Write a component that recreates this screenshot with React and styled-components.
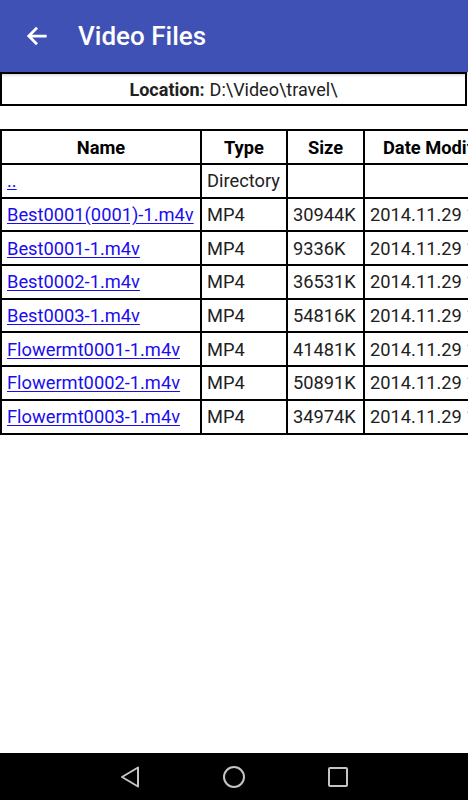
import React from "react";
import styled, { createGlobalStyle } from "styled-components";

const Global = createGlobalStyle`
  html, body { margin: 0; padding: 0; background: #fff; }
  body { font-family: Roboto, "Noto Sans", sans-serif; overflow: hidden; }
`;

const Screen = styled.div`
  width: 468px;
  height: 800px;
  display: flex;
  flex-direction: column;
  overflow: hidden;
  background: #fff;
`;

const AppBar = styled.header`
  height: 72px;
  flex: none;
  background: #3f51b5;
  display: flex;
  align-items: center;
  position: relative;
  z-index: 2;
  box-shadow: 0 2px 4px rgba(0, 0, 0, 0.3);
`;

const BackButton = styled.div`
  width: 31px;
  height: 31px;
  margin-left: 21px;
  display: flex;
  align-items: center;
  justify-content: center;
`;

const Title = styled.h1`
  margin: 0 0 0 26px;
  color: #fff;
  font-family: Roboto, sans-serif;
  font-weight: 500;
  font-size: 26px;
`;

const Content = styled.main`
  flex: 1;
  overflow: hidden;
`;

const LocationBox = styled.div`
  margin: 0 1px 0 0;
  height: 30px;
  border: 2px solid #000;
  display: flex;
  align-items: center;
  justify-content: center;
  font-size: 18px;
  color: #212121;
`;

const Bold = styled.b`
  font-weight: 700;
  margin-right: 5px;
`;

const TableWrap = styled.div`
  margin-top: 23px;
  width: 468px;
  overflow: hidden;
`;

const Table = styled.table`
  border-collapse: collapse;
  border: 2px solid #000;
  font-size: 18.3px;
  color: #212121;
  white-space: nowrap;
  table-layout: fixed;
  width: 516px;
`;

const Th = styled.th`
  border: 2px solid #000;
  height: 32px;
  padding: 0 5px;
  font-weight: 700;
  text-align: center;
  color: #000;
  overflow: hidden;
`;

const Td = styled.td`
  border: 2px solid #000;
  height: 31.7px;
  padding: 0 5px;
  text-align: left;
  vertical-align: middle;
  overflow: hidden;
`;

const FileLink = styled.a`
  color: #1a0dee;
  text-decoration: underline;
  text-underline-offset: 2px;
`;

const NavBar = styled.nav`
  height: 47px;
  flex: none;
  background: #000;
  display: flex;
  align-items: center;
  justify-content: center;
`;

const NavSlot = styled.div`
  width: 104px;
  display: flex;
  justify-content: center;
  align-items: center;
`;

const files = [
  ["Best0001(0001)-1.m4v", "30944K"],
  ["Best0001-1.m4v", "9336K"],
  ["Best0002-1.m4v", "36531K"],
  ["Best0003-1.m4v", "54816K"],
  ["Flowermt0001-1.m4v", "41481K"],
  ["Flowermt0002-1.m4v", "50891K"],
  ["Flowermt0003-1.m4v", "34974K"],
];

export default function App() {
  return (
    <>
      <Global />
      <Screen>
        <AppBar>
          <BackButton>
            <svg width="22" height="22" viewBox="0 0 16 16">
              <path d="M15 8H2M8 2L2 8l6 6" stroke="#fff" strokeWidth="2" fill="none" />
            </svg>
          </BackButton>
          <Title>Video Files</Title>
        </AppBar>
        <Content>
          <LocationBox>
            <Bold>Location:</Bold> D:\Video\travel\
          </LocationBox>
          <TableWrap>
            <Table>
              <colgroup>
                <col style={{ width: 200 }} />
                <col style={{ width: 86 }} />
                <col style={{ width: 77 }} />
                <col style={{ width: 153 }} />
              </colgroup>
              <thead>
                <tr>
                  <Th>Name</Th>
                  <Th>Type</Th>
                  <Th>Size</Th>
                  <Th>Date Modified</Th>
                </tr>
              </thead>
              <tbody>
                <tr>
                  <Td>
                    <FileLink href="#">..</FileLink>
                  </Td>
                  <Td>Directory</Td>
                  <Td></Td>
                  <Td></Td>
                </tr>
                {files.map(([n, s]) => (
                  <tr key={n}>
                    <Td>
                      <FileLink href="#">{n}</FileLink>
                    </Td>
                    <Td>MP4</Td>
                    <Td>{s}</Td>
                    <Td>2014.11.29 12:00</Td>
                  </tr>
                ))}
              </tbody>
            </Table>
          </TableWrap>
        </Content>
        <NavBar>
          <NavSlot>
            <svg width="22" height="24" viewBox="0 0 22 24">
              <path d="M19 2.5 L3 12 L19 21.5 Z" stroke="#c4c4c4" strokeWidth="2" fill="none" strokeLinejoin="round" />
            </svg>
          </NavSlot>
          <NavSlot>
            <svg width="24" height="24" viewBox="0 0 24 24">
              <circle cx="12" cy="12" r="10" stroke="#c4c4c4" strokeWidth="2" fill="none" />
            </svg>
          </NavSlot>
          <NavSlot>
            <svg width="22" height="22" viewBox="0 0 22 22">
              <rect x="2" y="2" width="18" height="18" rx="1" stroke="#c4c4c4" strokeWidth="2" fill="none" />
            </svg>
          </NavSlot>
        </NavBar>
      </Screen>
    </>
  );
}
